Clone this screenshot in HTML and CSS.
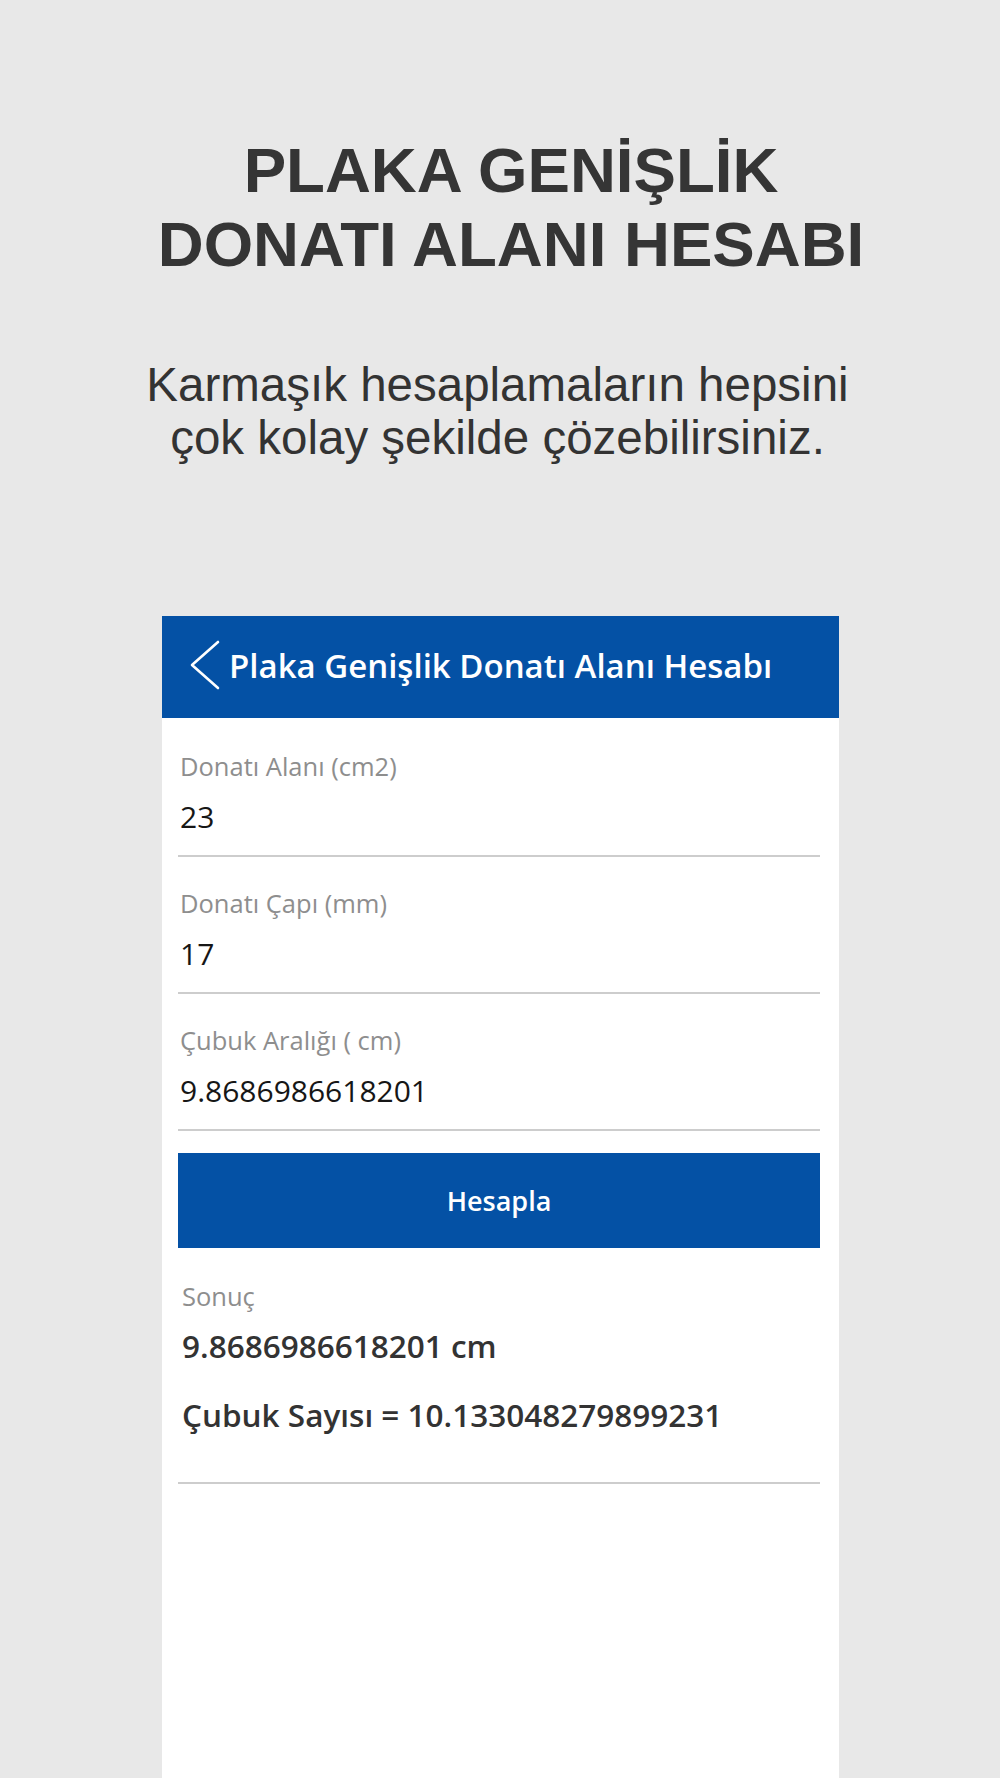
FILE: index.html
```html
<!DOCTYPE html>
<html lang="tr">
<head>
<meta charset="utf-8">
<title>Plaka Genişlik Donatı Alanı Hesabı</title>
<link rel="stylesheet" href="styles.css">
</head>
<body>
<div class="page">
  <h1 class="promo-title">PLAKA GENİŞLİK<br>DONATI ALANI HESABI</h1>
  <p class="promo-sub">Karmaşık hesaplamaların hepsini<br>çok kolay şekilde çözebilirsiniz.</p>

  <div class="screen">
    <div class="appbar">
      <svg class="back" width="30" height="50" viewBox="0 0 30 50" aria-hidden="true">
        <polyline points="28,2 2,25 28,48" fill="none" stroke="#ffffff" stroke-width="2.6" stroke-linecap="round" stroke-linejoin="round"/>
      </svg>
      <span class="appbar-title">Plaka Genişlik Donatı Alanı Hesabı</span>
    </div>

    <div class="form">
      <div class="field">
        <div class="label">Donatı Alanı (cm2)</div>
        <div class="value">23</div>
      </div>
      <div class="field">
        <div class="label">Donatı Çapı (mm)</div>
        <div class="value">17</div>
      </div>
      <div class="field">
        <div class="label">Çubuk Aralığı ( cm)</div>
        <div class="value">9.8686986618201</div>
      </div>

      <button class="calc">Hesapla</button>

      <div class="result">
        <div class="label">Sonuç</div>
        <div class="res-line first">9.8686986618201 cm</div>
        <div class="res-line second">Çubuk Sayısı = 10.133048279899231</div>
      </div>
    </div>
  </div>
</div>
</body>
</html>
```

FILE: styles.css
```css
html, body {
  margin: 0;
  padding: 0;
  background: #e8e8e8;
}

.page {
  width: 1000px;
  height: 1778px;
  display: flex;
  flex-direction: column;
  overflow: hidden;
}

.promo-title {
  margin: 0;
  padding: 133px 0 0 22px;
  font-family: "Liberation Sans", Arial, sans-serif;
  font-weight: bold;
  font-size: 63.6px;
  line-height: 74px;
  color: #353535;
  text-align: center;
}

.promo-sub {
  margin: 77px 0 0 0;
  padding-right: 5px;
  font-family: "Liberation Sans", Arial, sans-serif;
  font-weight: normal;
  font-size: 47.5px;
  line-height: 53px;
  color: #333333;
  text-align: center;
}

.screen {
  margin-top: 152px;
  margin-left: 162px;
  width: 677px;
  flex: 1;
  background: #ffffff;
  display: flex;
  flex-direction: column;
}

.appbar {
  height: 102px;
  background: #0451a5;
  display: flex;
  align-items: center;
  padding-left: 28px;
  padding-bottom: 4px;
  box-sizing: border-box;
}

.back {
  display: block;
  flex: none;
}

.appbar-title {
  margin-left: 9px;
  font-family: "Open Sans", "Noto Sans", sans-serif;
  font-weight: 600;
  font-size: 33px;
  color: #ffffff;
  white-space: nowrap;
}

.form {
  padding: 2px 0 0 16px;
  width: 642px;
}

.field {
  padding: 31px 0 18px 2px;
  border-bottom: 2px solid #cdcdcd;
}

.label {
  font-family: "Open Sans", "Noto Sans", sans-serif;
  font-weight: normal;
  font-size: 25.5px;
  line-height: 30px;
  color: #8e8e8e;
  white-space: nowrap;
}

.value {
  margin-top: 16px;
  font-family: "Open Sans", "Noto Sans", sans-serif;
  font-weight: 500;
  font-size: 30px;
  line-height: 40px;
  color: #161616;
  white-space: nowrap;
}

.calc {
  display: block;
  width: 642px;
  height: 95px;
  margin-top: 22px;
  border: 0;
  padding: 0;
  background: #0451a5;
  color: #ffffff;
  font-family: "Open Sans", "Noto Sans", sans-serif;
  font-weight: 600;
  font-size: 27px;
}

.result {
  padding: 33px 0 47px 4px;
  border-bottom: 2px solid #cdcdcd;
}

.res-line {
  font-family: "Open Sans", "Noto Sans", sans-serif;
  font-weight: 600;
  font-size: 31.5px;
  line-height: 40px;
  color: #333333;
  white-space: nowrap;
}

.res-line.first {
  margin-top: 15px;
}

.res-line.second {
  margin-top: 29px;
}
```
